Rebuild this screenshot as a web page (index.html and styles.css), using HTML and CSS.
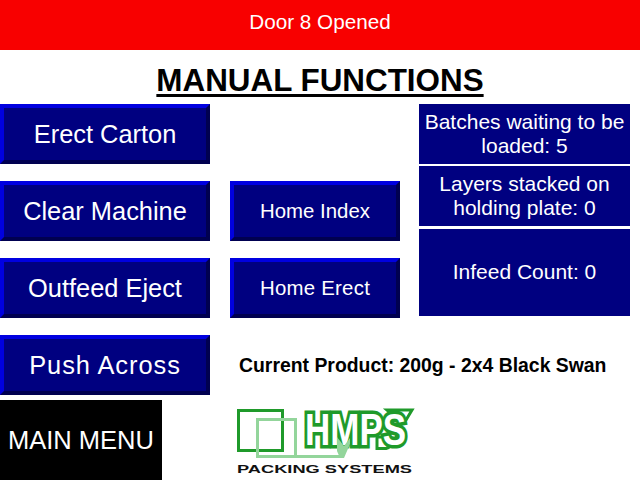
FILE: index.html
```html
<!DOCTYPE html>
<html lang="en">
<head>
<meta charset="utf-8">
<title>Manual Functions</title>
<link rel="stylesheet" href="styles.css">
</head>
<body>
<div class="banner">Door 8 Opened</div>
<h1 class="title">MANUAL FUNCTIONS</h1>
<main class="controls">
  <button class="btn btn-large row-1">Erect Carton</button>
  <button class="btn btn-large row-2">Clear Machine</button>
  <button class="btn btn-large row-3">Outfeed Eject</button>
  <button class="btn btn-large btn-wide row-4">Push Across</button>
  <button class="btn btn-small col-mid row-2">Home Index</button>
  <button class="btn btn-small btn-erect col-mid row-3">Home Erect</button>
  <section class="stats">
    <div class="stat stat-a">Batches waiting to be loaded: 5</div>
    <div class="stat stat-b">Layers stacked on holding plate: 0</div>
    <div class="stat stat-c">Infeed Count: 0</div>
  </section>
  <div class="product">Current Product: 200g - 2x4 Black Swan</div>
</main>
<footer class="footer">
  <button class="main-menu">MAIN MENU</button>
  <svg class="logo" width="180" height="73" viewBox="0 0 180 73" role="img" aria-label="HMPS Packing Systems">
    <path class="logo-frame" d="M1.5 3.5H45.5V43.5H1.5Z"/>
    <path class="logo-swoosh" d="M150 3H175L169 13H163C161 28 158 39 149 41.5H140V30H152C155 22 156 14 156 8Z"/>
    <text class="logo-word" transform="translate(68 38) scale(1.06 1.36)" font-size="33">HMPS</text>
    <path class="logo-light" d="M20.5 12.5H58.5V49.5H20.5Z"/>
    <path class="logo-light" d="M58.5 49.5H106"/>
    <path class="logo-tick" d="M100 30L107 39L113 31V37L107 51H103L100 44Z"/>
    <text class="logo-sub" x="0" y="66" textLength="175" lengthAdjust="spacingAndGlyphs">PACKING SYSTEMS</text>
  </svg>
</footer>
</body>
</html>
```
FILE: styles.css
```css
* { box-sizing: border-box; }
html, body { margin: 0; padding: 0; }
body {
  width: 640px;
  height: 480px;
  overflow: hidden;
  background: #fff;
  font-family: "Liberation Sans", Arial, sans-serif;
  color: #000;
}
.banner {
  height: 50px;
  background: #f80000;
  color: #fff;
  font-size: 20.7px;
  line-height: 44px;
  text-align: center;
}
.title {
  margin: 0;
  height: 54px;
  font-size: 31.4px;
  line-height: 61px;
  font-weight: bold;
  text-align: center;
  text-decoration: underline;
  text-decoration-thickness: 3px;
  text-underline-offset: 3px;
}
.controls {
  display: grid;
  grid-template-columns: 210px 170px 210px;
  grid-template-rows: repeat(4, 60px);
  column-gap: 20px;
  row-gap: 17px;
  height: 296px;
}
.btn {
  margin: 0;
  padding: 0;
  color: #fff;
  background: #000080;
  border-style: solid;
  border-width: 4px;
  border-color: #0000e0 #000050 #000050 #0000e0;
  font-family: inherit;
  text-align: center;
}
.btn-large { grid-column: 1; font-size: 25.4px; }
.btn-wide { letter-spacing: 0.95px; }
.btn-small { font-size: 20.4px; }
.btn-erect { letter-spacing: 0.25px; }
.col-mid { grid-column: 2; }
.row-1 { grid-row: 1; }
.row-2 { grid-row: 2; }
.row-3 { grid-row: 3; }
.row-4 { grid-row: 4; }
.stats {
  grid-column: 3;
  grid-row: 1 / span 3;
  margin-left: -1px;
  height: 212px;
  display: flex;
  flex-direction: column;
}
.stat {
  display: flex;
  align-items: center;
  justify-content: center;
  background: #000080;
  color: #fff;
  font-size: 21px;
  line-height: 24px;
  text-align: center;
  padding: 0 4px;
}
.stat-a { height: 60px; }
.stat-b { height: 60px; margin-top: 2px; }
.stat-c { height: 87px; margin-top: 3px; padding-bottom: 2px; }
.product {
  grid-column: 2 / span 2;
  grid-row: 4;
  align-self: center;
  margin-left: 9px;
  white-space: nowrap;
  font-size: 19.4px;
  font-weight: bold;
}
.footer {
  height: 80px;
  display: flex;
  align-items: flex-start;
  gap: 75px;
}
.main-menu {
  width: 162px;
  height: 80px;
  margin: 0;
  padding: 0;
  border: 0;
  background: #000;
  color: #fff;
  font-family: inherit;
  font-size: 25.5px;
}
.logo { margin-top: 7px; flex: none; }
.logo-frame { fill: none; stroke: #1f9a2a; stroke-width: 3; }
.logo-swoosh { fill: #fff; stroke: #1f9a2a; stroke-width: 3; }
.logo-light { fill: none; stroke: #93d59b; stroke-width: 3; }
.logo-tick { fill: #93d59b; }
.logo-word {
  font-family: "Liberation Sans", Arial, sans-serif;
  font-weight: bold;
  fill: #fff;
  stroke: #1f9a2a;
  stroke-width: 6.5;
  vector-effect: non-scaling-stroke;
  stroke-linejoin: miter;
  paint-order: stroke;
}
.logo-sub {
  font-family: "Liberation Sans", Arial, sans-serif;
  font-size: 10.5px;
  font-weight: bold;
  fill: #111;
}
```
